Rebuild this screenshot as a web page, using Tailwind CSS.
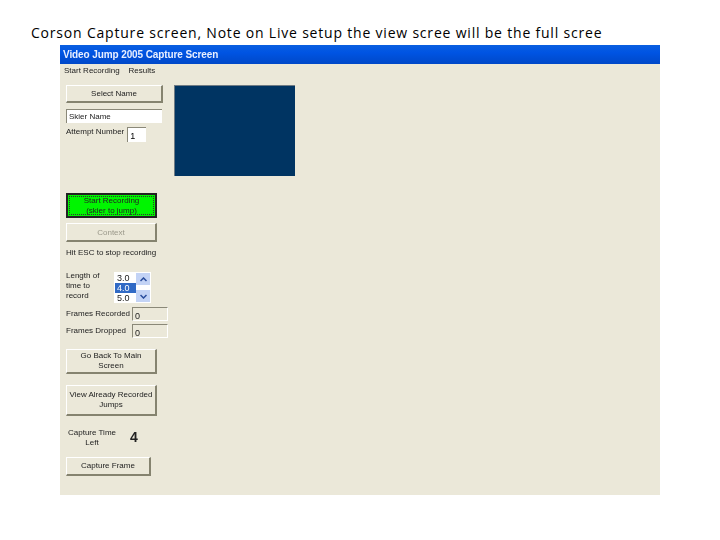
<!DOCTYPE html>
<html lang="en">
<head>
<meta charset="UTF-8">
<title>Corson Capture screen</title>
<script src="https://cdn.jsdelivr.net/npm/@tailwindcss/browser@4"></script>
</head>
<body class="bg-white w-[720px] h-[540px] overflow-hidden font-['Liberation_Sans',sans-serif]">
  <!-- Slide heading -->
  <h1 class="h-[45px] pt-[23px] pl-[31px] text-[14px] leading-[20px] tracking-[0.8px] text-black font-['Open_Sans',sans-serif] font-normal whitespace-nowrap">Corson Capture screen, Note on Live setup the view scree will be the full scree</h1>

  <!-- Capture window -->
  <div class="ml-[60px] w-[600px] h-[450px] bg-[#ebe8d9] text-[8px] leading-[10px] text-[#222] overflow-hidden blur-[0.25px]">
    <div class="h-[19px] pl-[3px] flex items-center text-[10px] tracking-[-0.1px] font-bold text-[#e8efff] bg-[linear-gradient(#0a5fe0,#0054e3_40%,#0048c8)]">Video Jump 2005 Capture Screen</div>
    <div class="h-[14px] pl-[4px] pt-[2px] flex gap-[9px]"><span>Start Recording</span><span>Results</span></div>

    <div class="flex items-start pl-[6px] pt-[7px]">
      <!-- Left controls -->
      <div class="w-[108px] flex flex-col">
        <button class="w-[97px] h-[18px] pt-[1px] bg-[#ebe8d9] border border-white border-r-[#85836f] border-b-[#85836f] border-r-2 border-b-2">Select Name</button>
        <div class="mt-[6px] w-[96px] h-[14px] pl-[2px] bg-white border-t border-l border-[#8a8878] flex items-center">Skier Name</div>
        <div class="mt-[4px] flex items-start gap-[3px]">
          <span class="whitespace-nowrap">Attempt Number</span>
          <span class="w-[19px] h-[15px] pl-[2px] pt-[3px] bg-white border-t border-l border-[#8a8878] text-black text-[9px]">1</span>
        </div>

        <button class="mt-[51px] w-[91px] h-[25px] bg-[#00f500] border-2 border-[#222] outline-1 outline-dotted -outline-offset-4 outline-[#333]">Start Recording<br>(skier to jump)</button>
        <button class="mt-[5px] w-[91px] h-[19px] pt-[1px] bg-[#ebe8d9] border border-white border-r-[#85836f] border-b-[#85836f] border-r-2 border-b-2 text-[#9a988a]">Context</button>
        <p class="mt-[6px] whitespace-nowrap">Hit ESC to stop recording</p>

        <div class="mt-[14px] flex items-start">
          <p class="w-[48px] -mt-[1px]">Length of<br>time to<br>record</p>
          <div class="w-[37px] h-[31px] bg-white flex pl-[1px] pt-[1px] text-[9px]">
            <div class="w-[21px] flex flex-col">
              <span class="h-[10px] pl-[2px]">3.0</span>
              <span class="h-[10px] pl-[2px] bg-[#316ac5] text-white">4.0</span>
              <span class="h-[10px] pl-[2px]">5.0</span>
            </div>
            <div class="w-[14px] flex flex-col justify-between pb-[1px]">
              <span class="h-[12px] bg-[#c3d3f5] flex items-center justify-center">
                <svg width="7" height="5" viewBox="0 0 7 5"><path d="M0.5 4 L3.5 1 L6.5 4" fill="none" stroke="#2a4d9c" stroke-width="1.5"/></svg>
              </span>
              <span class="h-[12px] bg-[#c3d3f5] flex items-center justify-center">
                <svg width="7" height="5" viewBox="0 0 7 5"><path d="M0.5 1 L3.5 4 L6.5 1" fill="none" stroke="#2a4d9c" stroke-width="1.5"/></svg>
              </span>
            </div>
          </div>
        </div>

        <div class="mt-[4px] flex items-center justify-between w-[102px]">
          <span class="whitespace-nowrap">Frames Recorded</span>
          <span class="w-[36px] h-[14px] pl-[2px] pt-[3px] border border-white border-t-[#8a8878] border-l-[#8a8878] text-[9px]">0</span>
        </div>
        <div class="mt-[3px] flex items-center justify-between w-[102px]">
          <span class="whitespace-nowrap">Frames Dropped</span>
          <span class="w-[36px] h-[14px] pl-[2px] pt-[3px] border border-white border-t-[#8a8878] border-l-[#8a8878] text-[9px]">0</span>
        </div>

        <button class="mt-[11px] w-[91px] h-[25px] bg-[#ebe8d9] border border-white border-r-[#85836f] border-b-[#85836f] border-r-2 border-b-2">Go Back To Main<br>Screen</button>
        <button class="mt-[11px] w-[91px] h-[31px] bg-[#ebe8d9] border border-white border-r-[#85836f] border-b-[#85836f] border-r-2 border-b-2 whitespace-nowrap">View Already Recorded<br>Jumps</button>

        <div class="mt-[12px] flex items-center h-[18px]">
          <p class="w-[52px] text-center whitespace-nowrap pt-[2px]">Capture Time<br>Left</p>
          <span class="ml-[12px] text-[14px] font-bold">4</span>
        </div>
        <button class="mt-[11px] w-[85px] h-[19px] bg-[#ebe8d9] border border-white border-r-[#85836f] border-b-[#85836f] border-r-2 border-b-2">Capture Frame</button>
      </div>

      <!-- Video preview -->
      <div class="w-[121px] h-[91px] bg-[#003462] border-t border-l border-[#6f7b84]"></div>
    </div>
  </div>
</body>
</html>
